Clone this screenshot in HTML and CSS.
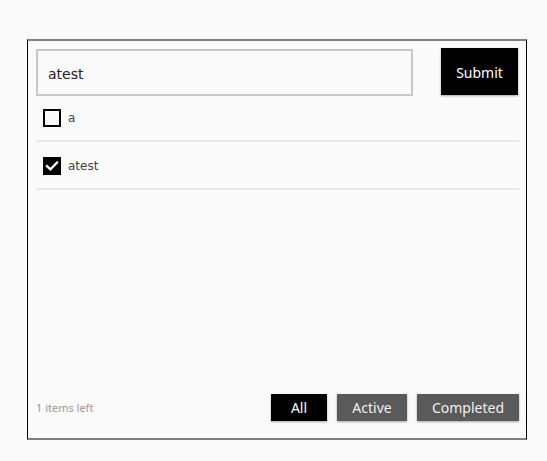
FILE: index.html
```html
<!DOCTYPE html>
<html>
<head>
<meta charset="utf-8">
<link rel="stylesheet" href="styles.css">
</head>
<body>
<div class="app">
  <form class="entry">
    <input class="entry-input" type="text" value="atest">
    <button class="submit" type="button">Submit</button>
  </form>
  <ul class="list">
    <li class="item">
      <span class="box"></span>
      <span class="label">a</span>
    </li>
    <li class="item">
      <span class="box checked">
        <svg width="18" height="18" viewBox="0 0 18 18"><path d="M4 9.2 L7.4 12.4 L14 5.6" fill="none" stroke="#fff" stroke-width="2.4" stroke-linecap="square"/></svg>
      </span>
      <span class="label">atest</span>
    </li>
  </ul>
  <div class="footer">
    <span class="count">1 items left</span>
    <div class="filters">
      <button class="filter on w-all" type="button">All</button>
      <button class="filter w-active" type="button">Active</button>
      <button class="filter w-completed" type="button">Completed</button>
    </div>
  </div>
</div>
</body>
</html>
```
FILE: styles.css
```css
html, body {
  margin: 0;
  padding: 0;
  background: #fafafa;
}
body {
  padding: 39px 0 0 27px;
  font-family: "DejaVu Sans", sans-serif;
}
.app {
  box-sizing: border-box;
  width: 500px;
  height: 401px;
  border-left: 1px solid #000;
  border-right: 1px solid #000;
  border-top: 2px solid #808080;
  border-bottom: 2px solid #808080;
  padding: 7px 7px 17px 8px;
  display: flex;
  flex-direction: column;
}
.entry {
  display: flex;
  align-items: flex-start;
  gap: 28px;
  margin: 0;
}
.entry-input {
  box-sizing: border-box;
  width: 377px;
  height: 47px;
  margin-top: 1px;
  border: 2px solid #c8c8c8;
  background: #fafafa;
  padding: 3px 10px 0;
  font-family: "DejaVu Sans", sans-serif;
  font-size: 14px;
  color: #222;
  outline: none;
}
.submit {
  width: 77px;
  height: 47px;
  border: none;
  background: #000;
  color: #fff;
  font-family: "Noto Sans", sans-serif;
  font-size: 14px;
  box-shadow: 0 1px 2px rgba(0,0,0,0.35);
  padding: 2px 0 0;
}
.list {
  list-style: none;
  margin: 0;
  padding: 0;
  flex: 1;
}
.item {
  height: 45px;
  border-bottom: 2px solid #e8e8e8;
  display: flex;
  align-items: center;
  padding-left: 7px;
  gap: 7px;
}
.item:first-child {
  height: 44px;
}
.item + .item {
  padding-top: 2px;
  height: 44px;
}
.box {
  box-sizing: border-box;
  width: 18px;
  height: 18px;
  border: 2px solid #000;
  display: block;
}
.box.checked {
  background: #000;
  border: none;
}
.box svg { display: block; }
.label {
  font-family: "DejaVu Sans", sans-serif;
  font-size: 12px;
  color: #444;
}
.footer {
  display: flex;
  align-items: center;
  justify-content: space-between;
}
.count {
  font-family: "Noto Sans", sans-serif;
  font-size: 11px;
  color: #999;
}
.filters {
  display: flex;
  gap: 10px;
}
.filter {
  height: 27px;
  padding: 0;
  border: none;
  background: #5a5a5a;
  color: #f0f0f0;
  font-family: "Noto Sans", sans-serif;
  font-size: 14px;
  box-shadow: 0 1px 2px rgba(0,0,0,0.35);
}
.filter.on {
  background: #000;
  color: #fff;
}
.w-all { width: 56px; }
.w-active { width: 70px; }
.w-completed { width: 102px; }
```
